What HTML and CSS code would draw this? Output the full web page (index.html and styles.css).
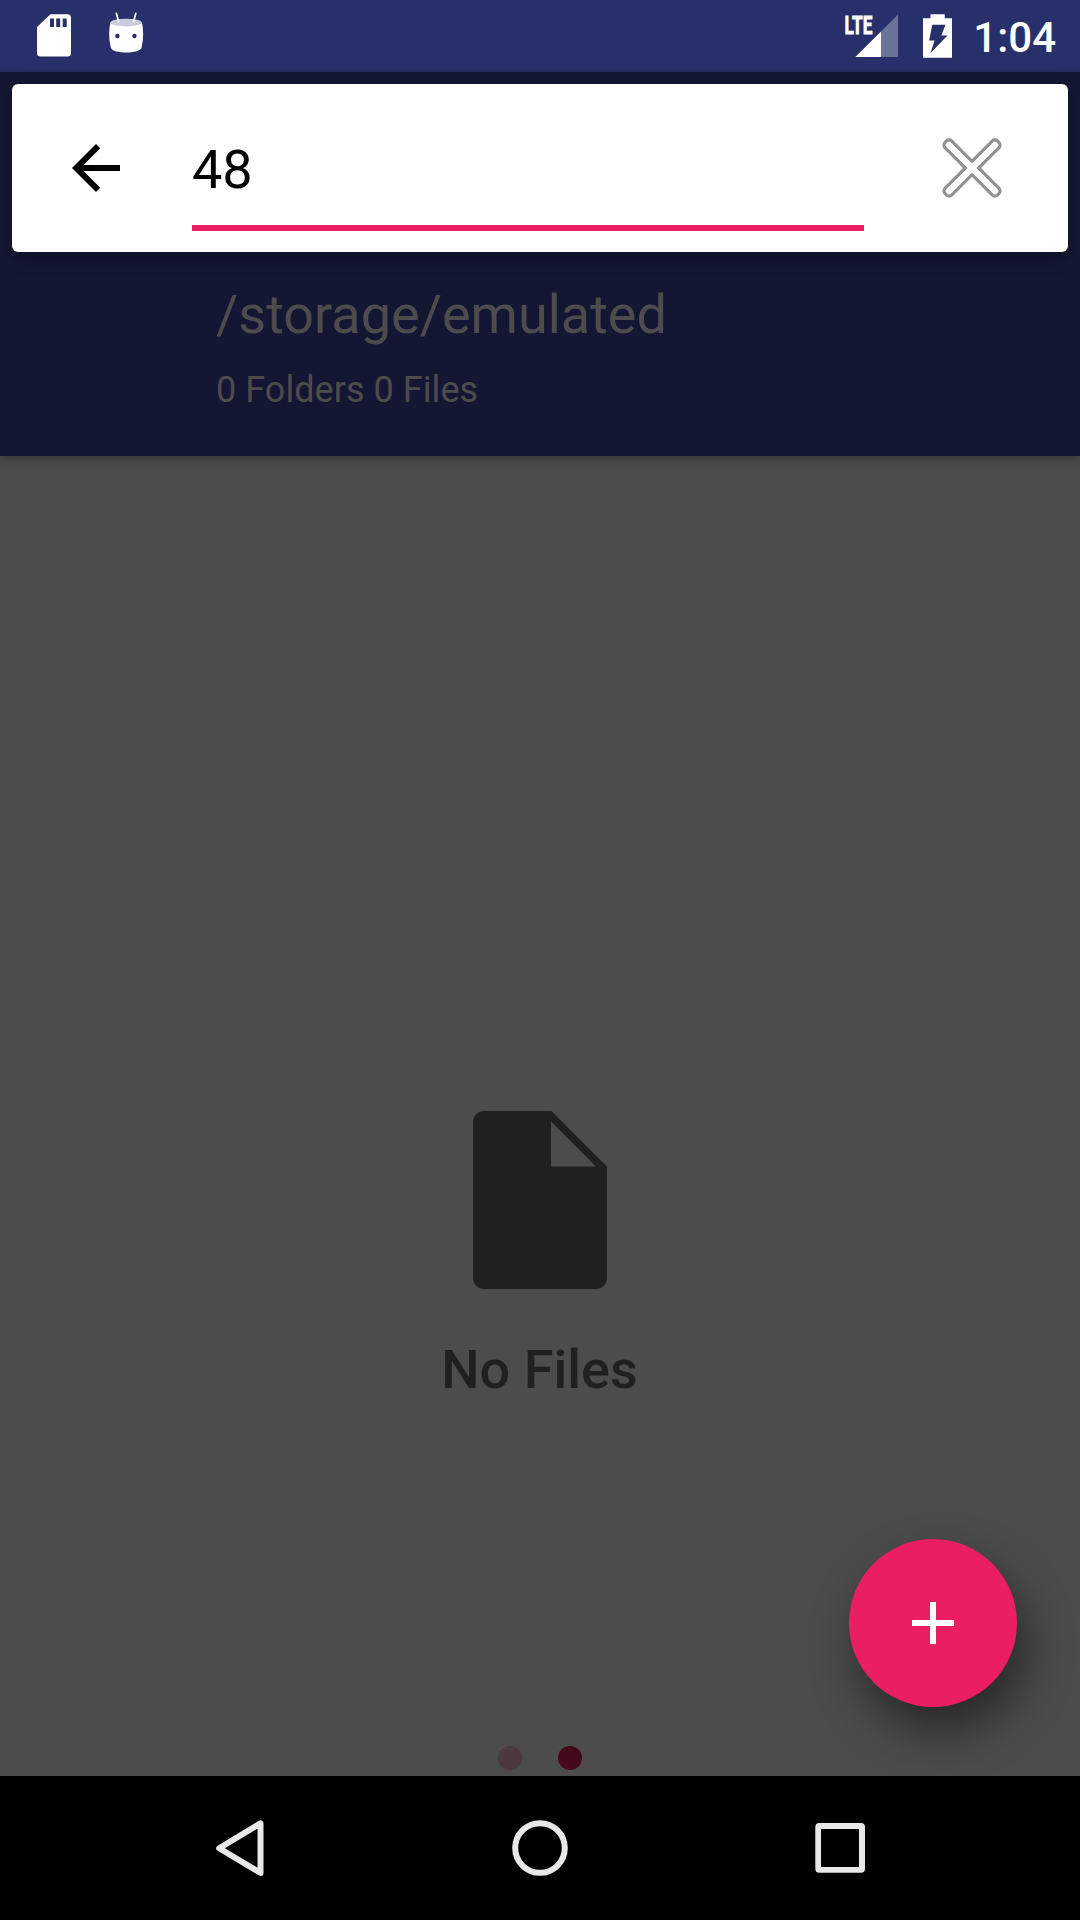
FILE: index.html
```html
<!DOCTYPE html>
<html lang="en">
<head>
<meta charset="utf-8">
<title>File Explorer</title>
<link rel="stylesheet" href="styles.css">
</head>
<body>
<div class="status">
  <svg class="status-icon sd" width="34" height="43" viewBox="37 14.5 34 43"><path fill="#fff" fill-rule="evenodd" d="M50.4 14.7H67.500a3.500 3.500 0 0 1 3.500 3.500V53.500a3.500 3.500 0 0 1-3.500 3.500H40.500a3.500 3.500 0 0 1-3.500-3.500V27.500zM50 19v8.500h4V19zM56.200 19v8.500h4V19zM62.700 19v8.500h4V19z"/></svg>
  <svg class="status-icon droid" width="36" height="42" viewBox="108 12 36 42"><path fill="#fff" d="M110.500 22C112 26 141 26 142 22Q144.500 36 141.500 48C139 54 113 54 111 48Q107.500 36 110.500 22z"/><ellipse cx="126.200" cy="22.600" rx="15.500" ry="3.900" fill="#c9cbdc"/><path d="M116.400 13.400l2.200 8M135.800 13.400l-2.200 8" stroke="#fff" stroke-width="1.700" stroke-linecap="round"/><circle cx="117.400" cy="36" r="2.200" fill="#27306b"/><circle cx="134.400" cy="36" r="2.200" fill="#27306b"/></svg>
  <svg class="status-icon signal" width="60" height="48" viewBox="838 10 60 48"><path fill="#fff" fill-opacity=".32" d="M898 14.500V57H881V31.500z"/><path fill="#fff" d="M881 31.500V57H855.300z"/><text class="lte" x="844.600" y="33.500" textLength="27.800" lengthAdjust="spacingAndGlyphs">LTE</text></svg>
  <svg class="status-icon battery" width="29" height="44" viewBox="923 14 29 44"><path fill="#fff" fill-rule="evenodd" d="M930.500 14.300h14.300v4H952v39.500h-29V18.300h7.500zM932.300 24.800l-3.200 15.700h5.500L930.500 53 947.500 35.500h-6.200L945.500 24.800z"/></svg>
  <span class="clock">1:04</span>
</div>
<header class="header">
  <div class="path">/storage/emulated</div>
  <div class="summary">0 Folders 0 Files</div>
</header>
<main class="content">
  <div class="empty">
    <svg width="134" height="178" viewBox="473 1111 134 178"><path fill="#202020" fill-rule="evenodd" d="M484 1111H551.500L607 1166.700V1278a11 11 0 0 1-11 11H484a11 11 0 0 1-11-11V1122a11 11 0 0 1 11-11zM551 1121.500V1166.500H596z"/></svg>
    <div class="empty-label">No Files</div>
  </div>
  <div class="pager"><i class="dot"></i><i class="dot active"></i></div>
  <div class="fab"><svg width="42" height="42" viewBox="0 0 42 42"><path d="M21 0v42M0 21h42" stroke="#fff" stroke-width="6"/></svg></div>
</main>
<nav class="nav">
  <svg width="60" height="60" viewBox="210 1818 60 60"><path d="M260.500 1823.300V1873L219.200 1848.200z" fill="none" stroke="#e8e8e8" stroke-width="6" stroke-linejoin="round"/></svg>
  <svg width="60" height="60" viewBox="510 1818 60 60"><circle cx="540" cy="1848" r="24.800" fill="none" stroke="#e8e8e8" stroke-width="6"/></svg>
  <svg width="60" height="60" viewBox="810 1818 60 60"><path fill="#e8e8e8" fill-rule="evenodd" d="M819.300 1823h41.700a4 4 0 0 1 4 4v41.700a4 4 0 0 1-4 4h-41.700a4 4 0 0 1-4-4V1827a4 4 0 0 1 4-4zM821 1829v38h38v-38z"/></svg>
</nav>
<div class="search">
  <svg class="back" width="72" height="72" viewBox="0 0 24 24"><path d="M20 11H7.830l5.590-5.590L12 4l-8 8 8 8 1.410-1.410L7.830 13H20v-2z"/></svg>
  <div class="field">48</div>
  <svg class="clear" width="72" height="72" viewBox="-36 -36 72 72"><path transform="rotate(45)" fill="none" stroke="#929292" stroke-width="3.200" d="M-4.700-4.700V-33.500a3.500 3.500 0 0 1 3.500-3.500h2.400a3.500 3.500 0 0 1 3.500 3.500V-4.700H33.500a3.500 3.500 0 0 1 3.500 3.500v2.400a3.500 3.500 0 0 1-3.500 3.500H4.700V33.500a3.500 3.500 0 0 1-3.500 3.500h-2.400a3.500 3.500 0 0 1-3.500-3.500V4.700H-33.500a3.500 3.500 0 0 1-3.500-3.500v-2.400a3.500 3.500 0 0 1 3.500-3.500z"/></svg>
</div>
</body>
</html>
```
FILE: styles.css
```css
* { box-sizing: border-box; }
body {
  margin: 0;
  width: 1080px;
  height: 1920px;
  position: relative;
  display: flex;
  flex-direction: column;
  overflow: hidden;
  background: #4c4c4c;
  font-family: Roboto, sans-serif;
}
svg { display: block; flex: none; }
.status {
  height: 72px;
  background: #27306b;
  display: flex;
  align-items: flex-start;
  padding: 14px 24px 0 37px;
}
.droid { margin: -2px 0 0 37px; }
.signal { margin: -4px 0 0 auto; overflow: visible; }
.battery { margin-left: 25px; }
.lte { font-weight: 700; font-size: 26.5px; fill: #fff; stroke: #fff; stroke-width: .8px; }
.clock {
  margin-left: 21px;
  color: #fff;
  font-size: 42px;
  line-height: 48px;
  font-weight: 500;
}
.header {
  height: 384px;
  background: #141733;
  color: #4c4c4c;
  padding: 211px 0 0 216px;
  position: relative;
  z-index: 1;
  box-shadow: 0 3px 10px rgba(0, 0, 0, .3);
}
.path { font-size: 54px; line-height: 64px; }
.summary { font-size: 36px; line-height: 42px; margin-top: 22px; letter-spacing: .05px; }
.content {
  flex: 1;
  position: relative;
  display: flex;
  flex-direction: column;
  justify-content: space-between;
  align-items: center;
  padding: 655px 0 6px;
}
.empty {
  display: flex;
  flex-direction: column;
  align-items: center;
  gap: 49px;
}
.empty-label {
  font-size: 54px;
  line-height: 64px;
  font-weight: 500;
  color: #202020;
  margin-right: 1px;
}
.pager { display: flex; gap: 36px; }
.dot {
  width: 24px;
  height: 24px;
  border-radius: 50%;
  background: #4c383e;
}
.dot.active { background: #46091b; }
.fab {
  position: absolute;
  right: 63px;
  bottom: 69px;
  width: 168px;
  height: 168px;
  border-radius: 50%;
  background: #e91e63;
  display: flex;
  align-items: center;
  justify-content: center;
  box-shadow: 9px 24px 48px rgba(0, 0, 0, .48);
}
.nav {
  height: 144px;
  background: #000;
  display: flex;
  justify-content: space-between;
  align-items: center;
  padding: 0 210px;
  position: relative;
}
.search {
  position: absolute;
  z-index: 2;
  left: 12px;
  top: 84px;
  width: 1056px;
  height: 168px;
  border-radius: 6px;
  background: #fff;
  box-shadow: 0 6px 18px rgba(0, 0, 0, .32);
  display: flex;
  align-items: center;
  padding: 0 60px 0 48px;
}
.field {
  width: 672px;
  height: 126px;
  margin: 0 auto 0 60px;
  border-bottom: 6px solid #e91e63;
  font-size: 54px;
  line-height: 130px;
  color: #000;
}
```
